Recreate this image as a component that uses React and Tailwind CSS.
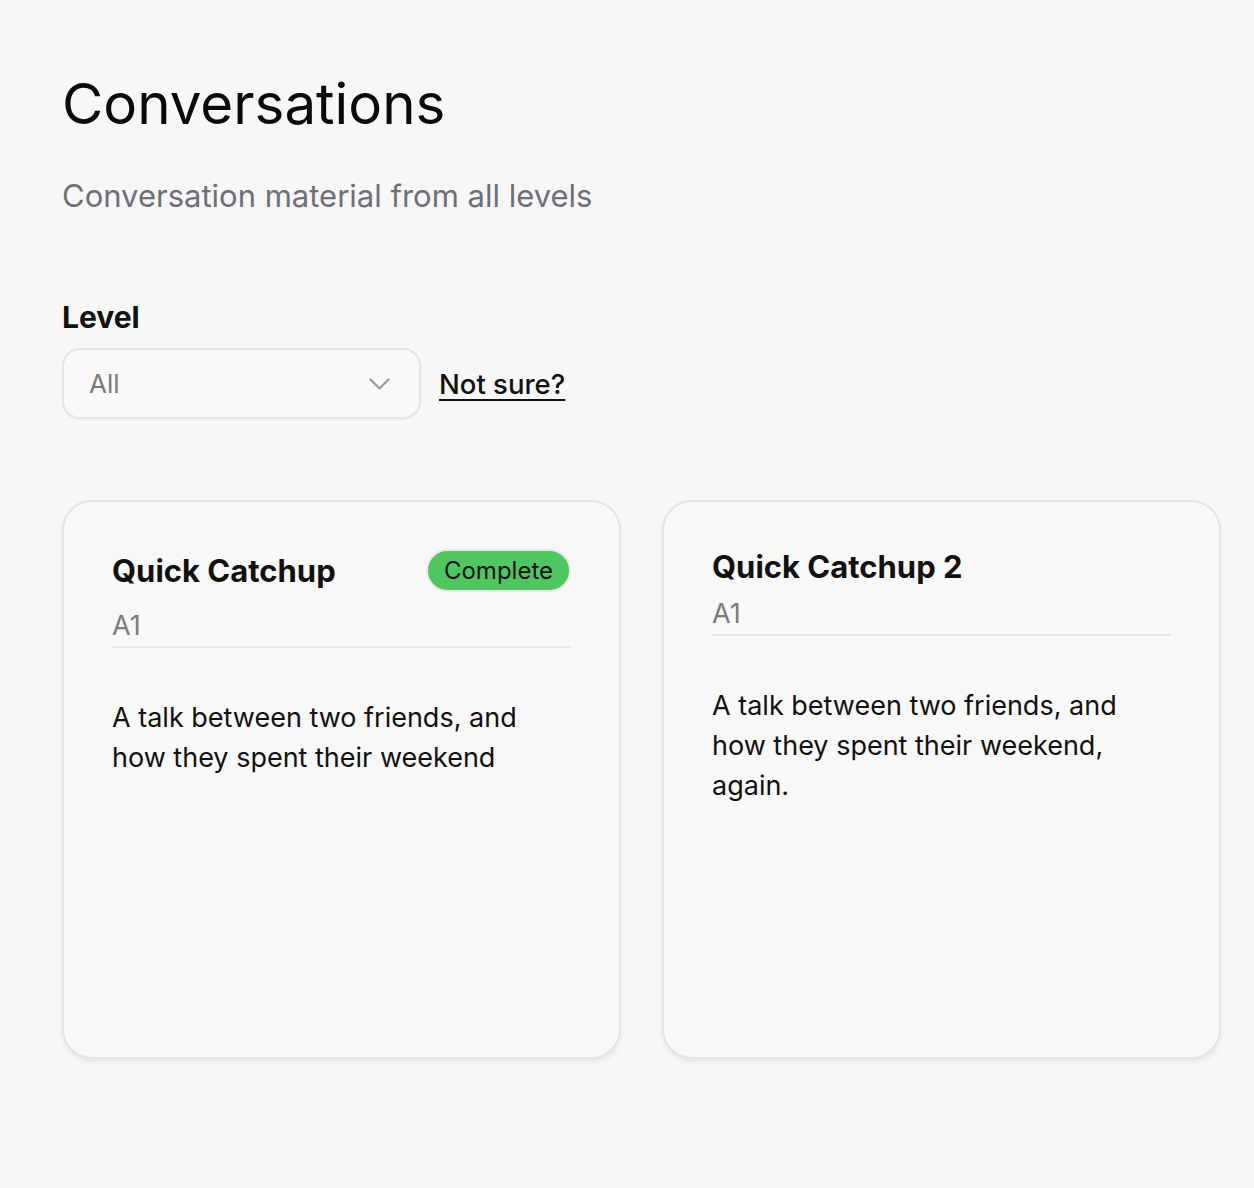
import React from "react";

function Chevron() {
  return (
    <svg width="21" height="12" viewBox="0 0 21 12" fill="none" className="text-[#9a9a9a]">
      <path d="M1.5 1.5l9 9 9-9" stroke="currentColor" strokeWidth="2.2" strokeLinecap="round" strokeLinejoin="round" />
    </svg>
  );
}

function Card({ title, level, desc, complete }) {
  return (
    <div className="shrink-0 w-[559px] h-[559px] rounded-[30px] border-2 border-[#e4e4e4] bg-[#f8f8f8] shadow-[0_3px_5px_rgba(0,0,0,0.07)] px-[48px] pt-[47px]">
      <div className={(complete ? "min-h-[43px]" : "") + " flex items-center justify-between"}>
        <h2 className="text-[31px] leading-[36px] font-bold text-[#111]">{title}</h2>
        {complete && (
          <span className="h-[43px] px-[16px] flex items-center rounded-full bg-[#4fc660] border-2 border-[#e8e8e8] text-[24px] text-[#111]">
            Complete
          </span>
        )}
      </div>
      <div className={(complete ? "mt-[18px]" : "mt-[13px]") + " border-b-2 border-[#e5e5e5] pb-[4px] text-[27px] leading-[32px] text-[#7a7a7a]"}>
        {level}
      </div>
      <p className="mt-[50px] text-[27px] leading-[40px] text-[#111]">{desc}</p>
    </div>
  );
}

export default function App() {
  return (
    <div className="min-h-[1188px] bg-[#f7f7f7] px-[62px] pt-[69px] font-['Inter',sans-serif]">
      <h1 className="text-[56.5px] leading-[70px] font-normal text-[#0a0a0a]">Conversations</h1>
      <p className="mt-[37px] text-[31px] leading-[40px] text-[#6f6f78]">Conversation material from all levels</p>
      <div className="mt-[83px]">
        <div className="text-[30px] leading-[36px] font-bold text-[#111]">Level</div>
        <div className="mt-[13px] flex items-center gap-[18px]">
          <div className="w-[359px] h-[71px] rounded-[18px] border-2 border-[#e4e4e4] bg-[#f9f9f9] shadow-[0_1px_2px_rgba(0,0,0,0.05)] flex items-center justify-between pl-[25px] pr-[29px]">
            <span className="text-[26px] text-[#7a7a7a]">All</span>
            <Chevron />
          </div>
          <a className="mt-[2px] text-[27.5px] font-medium text-[#111] underline underline-offset-[5px] decoration-2">Not sure?</a>
        </div>
      </div>
      <div className="mt-[81px] flex gap-[41px]">
        <Card title="Quick Catchup" level="A1" complete desc="A talk between two friends, and how they spent their weekend" />
        <Card title="Quick Catchup 2" level="A1" desc="A talk between two friends, and how they spent their weekend, again." />
      </div>
    </div>
  );
}
